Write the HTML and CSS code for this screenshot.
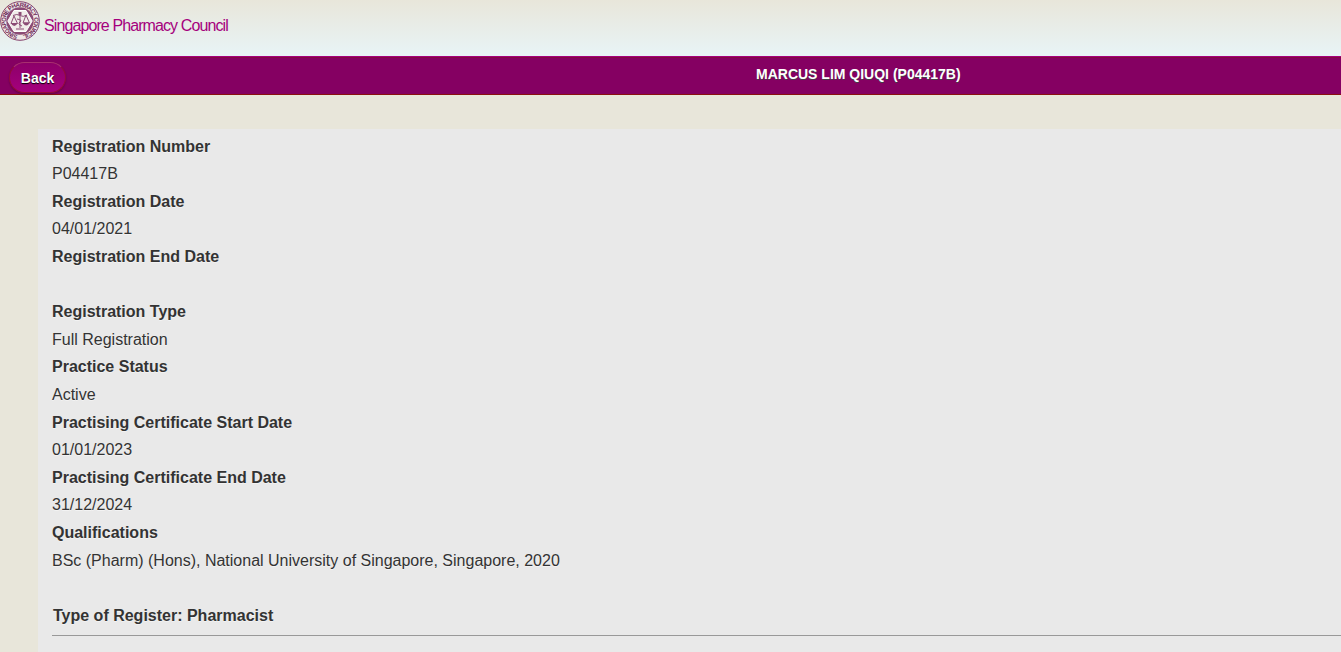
FILE: index.html
```html
<!DOCTYPE html>
<html lang="en">
<head>
<meta charset="utf-8">
<title>Singapore Pharmacy Council</title>
<link rel="stylesheet" href="styles.css">
</head>
<body>
<header class="brand">
  <svg class="seal" viewBox="0 0 40 40" aria-hidden="true">
    <defs><path id="ring" d="M20 36.2A16.2 16.2 0 1 1 20.1 36.2"/></defs>
    <circle class="seal-disc" cx="20" cy="20" r="19.3"/>
    <text class="seal-text"><textPath href="#ring" startOffset="3" textLength="95">SINGAPORE PHARMACY COUNCIL</textPath></text>
    <circle class="seal-inner" cx="20" cy="20" r="13.7"/>
    <path class="seal-hex" d="M14 9.5h12L32.2 20 26 30.5H14L7.8 20z"/>
    <path class="seal-lines" d="M20 11v16M16 28h8M13 14.5q4-2 7 0t7-.5M14 15l-3 7.500h6.500zM26 14l-3 8h6.500zM17 18q6 1 3 3t2 4"/>
    <path class="seal-fill" d="M11 22h6.500q-1 3-3.200 3T11 22zM23 21.500h6.500q-1 3-3.200 3t-3.300-3zM18.500 11h3v3h-3z"/>
  </svg>
  <span class="brand-name">Singapore Pharmacy Council</span>
</header>
<div class="bar">
  <a class="back">Back</a>
  <h1 class="title">MARCUS LIM QIUQI (P04417B)</h1>
</div>
<main class="panel">
  <dl class="details">
    <dt>Registration Number</dt><dd>P04417B</dd>
    <dt>Registration Date</dt><dd>04/01/2021</dd>
    <dt>Registration End Date</dt><dd></dd>
    <dt>Registration Type</dt><dd>Full Registration</dd>
    <dt>Practice Status</dt><dd>Active</dd>
    <dt>Practising Certificate Start Date</dt><dd>01/01/2023</dd>
    <dt>Practising Certificate End Date</dt><dd>31/12/2024</dd>
    <dt>Qualifications</dt><dd>BSc (Pharm) (Hons), National University of Singapore, Singapore, 2020</dd>
  </dl>
  <h2 class="register">Type of Register: Pharmacist</h2>
  <hr class="rule">
</main>
</body>
</html>
```
FILE: styles.css
```css
* { box-sizing: border-box; }
html, body { height: 100%; }
body {
  margin: 0;
  overflow: hidden;
  background: #e8e6da;
  font-family: "Liberation Sans", Arial, sans-serif;
  font-size: 16px;
  color: #333;
}
.brand {
  display: flex;
  height: 56px;
  background: linear-gradient(#e8e6da, #e8f4f6);
}
.seal { width: 40px; height: 40px; margin-top: 1px; flex: none; }
.seal-disc { fill: #eee7e6; stroke: #83406b; stroke-width: 1; }
.seal-inner { fill: #8b4b75; }
.seal-hex { fill: #f1ecea; stroke: #fff; stroke-width: 1; }
.seal-lines { fill: none; stroke: #8b4b75; stroke-width: 1; }
.seal-fill { fill: #8b4b75; }
.seal-text { font-size: 6px; font-weight: bold; fill: #702b59; dominant-baseline: middle; }
.brand-name {
  margin: 16px 0 0 4px;
  line-height: 19px;
  letter-spacing: -0.9px;
  color: #a5007d;
  white-space: nowrap;
}
.bar {
  display: flex;
  height: 39px;
  padding-left: 9px;
  background: #850062;
  border-top: 1px solid #a5007d;
  border-bottom: 1px solid #8b1010;
  box-shadow: inset 0 1px #850a40;
}
.back {
  width: 57px;
  height: 31px;
  margin-top: 5px;
  border: 1px solid #950b39;
  border-top-color: #a8306f;
  border-radius: 16px;
  background: linear-gradient(#8d0069, #a5007d);
  box-shadow: 0 1px 2px rgba(0, 0, 0, .3);
  color: #fff;
  font-size: 14px;
  font-weight: bold;
  line-height: 30px;
  text-align: center;
  text-shadow: 0 1px 1px #000;
}
.title {
  margin: 8px 0 0 690px;
  color: #fff;
  font-size: 14px;
  line-height: 18px;
  text-shadow: 0 1px 0 #444;
  white-space: nowrap;
}
.panel {
  height: 523px;
  margin: 34px 0 0 38px;
  padding: 3.6px 0 0 14px;
  background: #e9e9e9;
  text-shadow: 0 1px 0 #f3f3f3;
}
.details { margin: 0; line-height: 27.6px; }
.details dt { font-weight: bold; }
.details dd { margin: 0; min-height: 27.6px; }
.register {
  margin: 27.6px 0 0 1px;
  font-size: 16px;
  line-height: 27.6px;
}
.rule { height: 1px; margin: 6px 0 0; border: 0; background: #999; }
```
